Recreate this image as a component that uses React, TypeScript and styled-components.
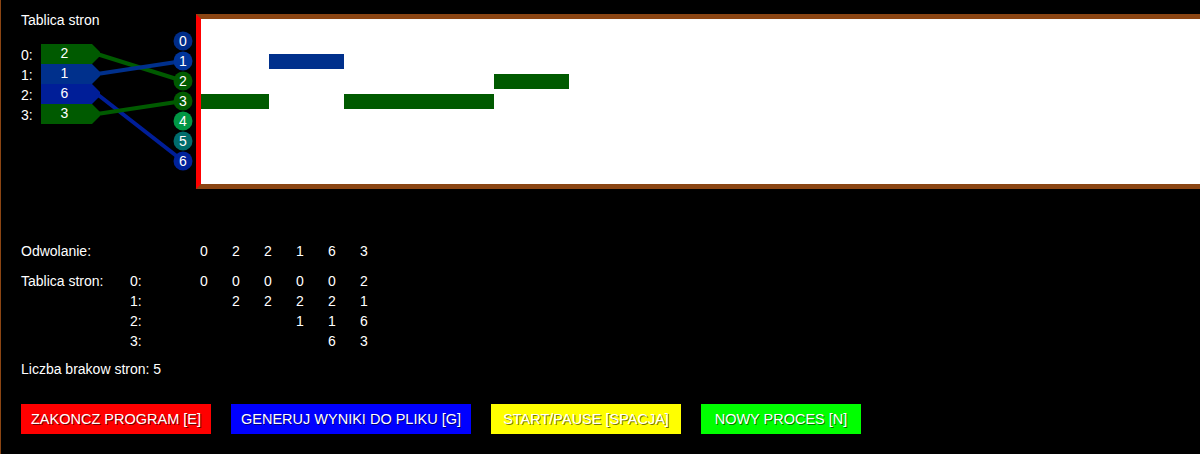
import React from "react";
import styled, { createGlobalStyle } from "styled-components";

const GlobalStyle = createGlobalStyle`
  html, body {
    margin: 0;
    padding: 0;
    background: #000;
  }
  body {
    font-family: "Liberation Sans", Arial, sans-serif;
    font-size: 14px;
    color: #fff;
  }
`;

const GREEN = "#005a00";
const BLUE = "#00308c";
const DEEP_BLUE = "#001e98";

const Page = styled.div`
  box-sizing: border-box;
  width: 1200px;
  height: 454px;
  border-left: 1px solid #8b4513;
  overflow: hidden;
  display: flex;
  flex-direction: column;
`;

const Top = styled.div`
  display: flex;
  align-items: flex-start;
`;

const LeftColumn = styled.div`
  width: 195px;
  flex: none;
`;

const Title = styled.div`
  padding: 10px 0 0 20px;
  line-height: 20px;
`;

const Diagram = styled.svg`
  display: block;
  font-family: "Liberation Sans", Arial, sans-serif;
  font-size: 14px;
`;

const Panel = styled.div`
  flex: 1;
  margin-top: 14px;
  height: 165px;
  background: #fff;
  border-top: 5px solid #8b4513;
  border-bottom: 5px solid #8b4513;
  border-left: 5px solid #ff0000;
  position: relative;
  overflow: hidden;
`;

const Bar = styled.div<{ $color: string }>`
  position: absolute;
  height: 15px;
  background: ${(p) => p.$color};
`;

const Stats = styled.div`
  margin-top: 52px;
  padding-left: 20px;
  line-height: 20px;
`;

const Grid = styled.div<{ $gapBelow?: number }>`
  display: grid;
  grid-template-columns: 109px 58px repeat(6, 32px);
  grid-auto-rows: 20px;
  margin-bottom: ${(p) => p.$gapBelow ?? 0}px;
`;

const Cell = styled.div<{ $center?: boolean }>`
  text-align: ${(p) => (p.$center ? "center" : "left")};
  white-space: nowrap;
`;

const Faults = styled.div`
  margin-top: 8px;
`;

const Buttons = styled.div`
  display: flex;
  gap: 20px;
  padding-left: 20px;
  margin-top: 25px;
`;

const Button = styled.div<{ $bg: string; $w: number }>`
  width: ${(p) => p.$w}px;
  height: 30px;
  background: ${(p) => p.$bg};
  color: #fff;
  font-size: 14.5px;
  display: flex;
  align-items: center;
  justify-content: center;
  white-space: nowrap;
  text-shadow: 1px 1px 0 rgba(0, 0, 0, 0.55);
`;

const tags = [
  { page: 2, color: GREEN },
  { page: 1, color: BLUE },
  { page: 6, color: DEEP_BLUE },
  { page: 3, color: GREEN },
];

const circleColors = ["#002c88", "#00349a", GREEN, GREEN, "#009644", "#006c6c", "#00229a"];

const bars = [
  { row: 3, start: 0, end: 68, color: GREEN },
  { row: 1, start: 68, end: 143, color: BLUE },
  { row: 3, start: 143, end: 293, color: GREEN },
  { row: 2, start: 293, end: 368, color: GREEN },
];

const refs = [0, 2, 2, 1, 6, 3];
const table: (number | null)[][] = [
  [0, 0, 0, 0, 0, 2],
  [null, 2, 2, 2, 2, 1],
  [null, null, null, 1, 1, 6],
  [null, null, null, null, 6, 3],
];

const buttons = [
  { label: "ZAKONCZ PROGRAM [E]", bg: "#ff0000", w: 190 },
  { label: "GENERUJ WYNIKI DO PLIKU [G]", bg: "#0000ff", w: 240 },
  { label: "START/PAUSE [SPACJA]", bg: "#ffff00", w: 190 },
  { label: "NOWY PROCES [N]", bg: "#00ff00", w: 160 },
];

function PageDiagram() {
  const cx = 183;
  return (
    <Diagram width={195} height={150} viewBox="1 30 195 150">
      {tags.map((t, i) => {
        const y = 44 + i * 20;
        return (
          <g key={`tag${i}`}>
            <text x={21} y={60 + i * 20} fill="#fff">
              {i}:
            </text>
            <polygon
              points={`41,${y} 92,${y} 100,${y + 8} 100,${y + 12} 92,${y + 20} 41,${y + 20}`}
              fill={t.color}
            />
            <text x={64.5} y={58 + i * 20} fill="#fff" textAnchor="middle">
              {t.page}
            </text>
          </g>
        );
      })}
      {tags.map((t, i) => (
        <line
          key={`ln${i}`}
          x1={97}
          y1={54 + i * 20}
          x2={cx}
          y2={41 + t.page * 20}
          stroke={t.color}
          strokeWidth={4}
        />
      ))}
      {circleColors.map((c, i) => (
        <g key={`c${i}`}>
          <circle cx={cx} cy={41 + i * 20} r={9.5} fill={c} />
          <text x={cx} y={46 + i * 20} fill="#fff" textAnchor="middle">
            {i}
          </text>
        </g>
      ))}
    </Diagram>
  );
}

export default function App() {
  return (
    <>
      <GlobalStyle />
      <Page>
        <Top>
          <LeftColumn>
            <Title>Tablica stron</Title>
            <PageDiagram />
          </LeftColumn>
          <Panel>
            {bars.map((b, i) => (
              <Bar
                key={i}
                $color={b.color}
                style={{ left: b.start, width: b.end - b.start, top: 15 + b.row * 20 }}
              />
            ))}
          </Panel>
        </Top>
        <Stats>
          <Grid $gapBelow={10}>
            <Cell style={{ gridColumn: "1 / 3" }}>Odwolanie:</Cell>
            {refs.map((r, i) => (
              <Cell key={i} $center>
                {r}
              </Cell>
            ))}
          </Grid>
          <Grid>
            {table.map((row, ri) => (
              <React.Fragment key={ri}>
                <Cell>{ri === 0 ? "Tablica stron:" : ""}</Cell>
                <Cell>{ri}:</Cell>
                {row.map((v, ci) => (
                  <Cell key={ci} $center>
                    {v ?? ""}
                  </Cell>
                ))}
              </React.Fragment>
            ))}
          </Grid>
          <Faults>Liczba brakow stron: 5</Faults>
        </Stats>
        <Buttons>
          {buttons.map((b) => (
            <Button key={b.label} $bg={b.bg} $w={b.w}>
              {b.label}
            </Button>
          ))}
        </Buttons>
      </Page>
    </>
  );
}
